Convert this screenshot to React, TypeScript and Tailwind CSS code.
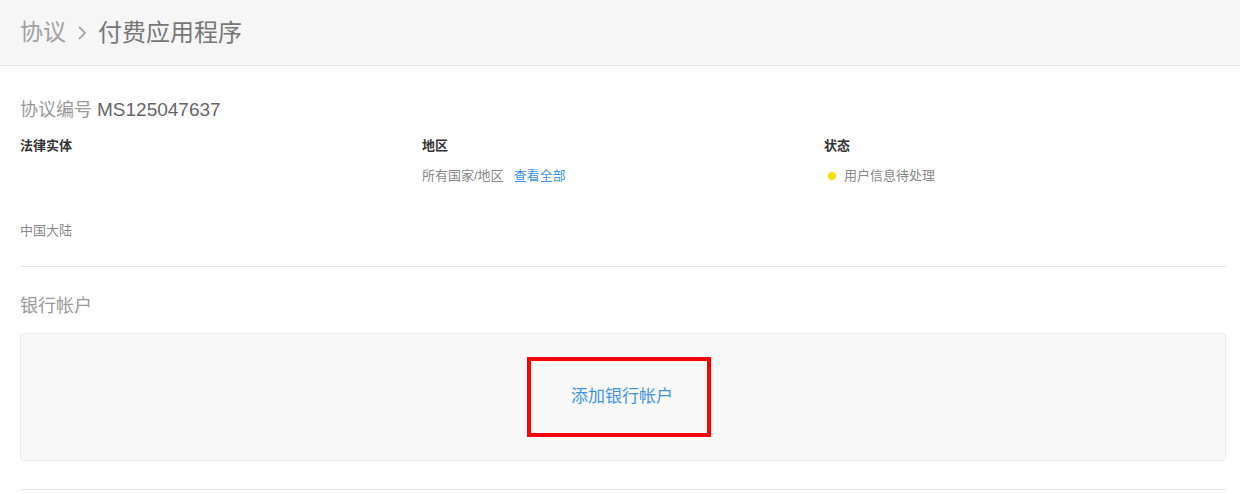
import React from 'react';

const font = { fontFamily: '"Liberation Sans", "Noto Sans CJK SC", sans-serif' };

function Field({ label, children }: { label: string; children?: React.ReactNode }) {
  return (
    <div className="flex flex-col">
      <div className="h-[20px] text-[13px] font-bold leading-[20px] text-[#333]">{label}</div>
      <div className="mt-[10px] h-[20px] text-[13px] leading-[20px] text-[#888]">{children}</div>
    </div>
  );
}

export default function App() {
  return (
    <div className="min-h-[494px] w-[1240px] bg-white" style={font}>
      {/* 顶部面包屑 */}
      <div className="flex h-[66px] items-center border-b border-[#e5e5e5] bg-[#f6f6f6] px-[20px]">
        <span className="text-[23px] text-[#a0a0a0]">协议</span>
        <svg width="14" height="22" viewBox="0 0 14 22" className="ml-[9px] mr-[9px]" fill="none">
          <path d="M4 5 L10 11 L4 17" stroke="#9a9a9a" strokeWidth="1.6" />
        </svg>
        <span className="text-[24px] text-[#777]">付费应用程序</span>
      </div>

      <div className="pl-[20px] pr-[14px]">
        <div className="pt-[32px] text-[18px] leading-[24px]">
          <span className="text-[#999]">协议编号 </span>
          <span className="text-[19px] text-[#666]">MS125047637</span>
        </div>

        <div className="mt-[14px] grid grid-cols-3">
          <Field label="法律实体" />
          <Field label="地区">
            所有国家/地区<span className="ml-[10px] text-[#3d94e6]">查看全部</span>
          </Field>
          <Field label="状态">
            <span className="flex items-center">
              <span className="ml-[4px] mr-[8px] h-[8px] w-[8px] rounded-full bg-[#f4e100]" />
              用户信息待处理
            </span>
          </Field>
        </div>

        <div className="mt-[35px] h-[20px] text-[13px] leading-[20px] text-[#888]">中国大陆</div>

        <div className="mt-[25px] border-t border-[#e6e6e6]" />

        <div className="pt-[27px] text-[18px] leading-[24px] text-[#999]">银行帐户</div>

        <div className="mt-[15px] flex h-[128px] items-center justify-center rounded-[3px] border border-[#ebebeb] bg-[#f9f9f9]">
          <div className="mr-[8px] flex h-[80px] w-[184px] items-center justify-center border-[4px] border-[#ff0000]">
            <span className="ml-[6px] text-[17px] text-[#3d94e6]">添加银行帐户</span>
          </div>
        </div>

        <div className="mt-[28px] border-t border-[#e6e6e6]" />
      </div>
    </div>
  );
}
